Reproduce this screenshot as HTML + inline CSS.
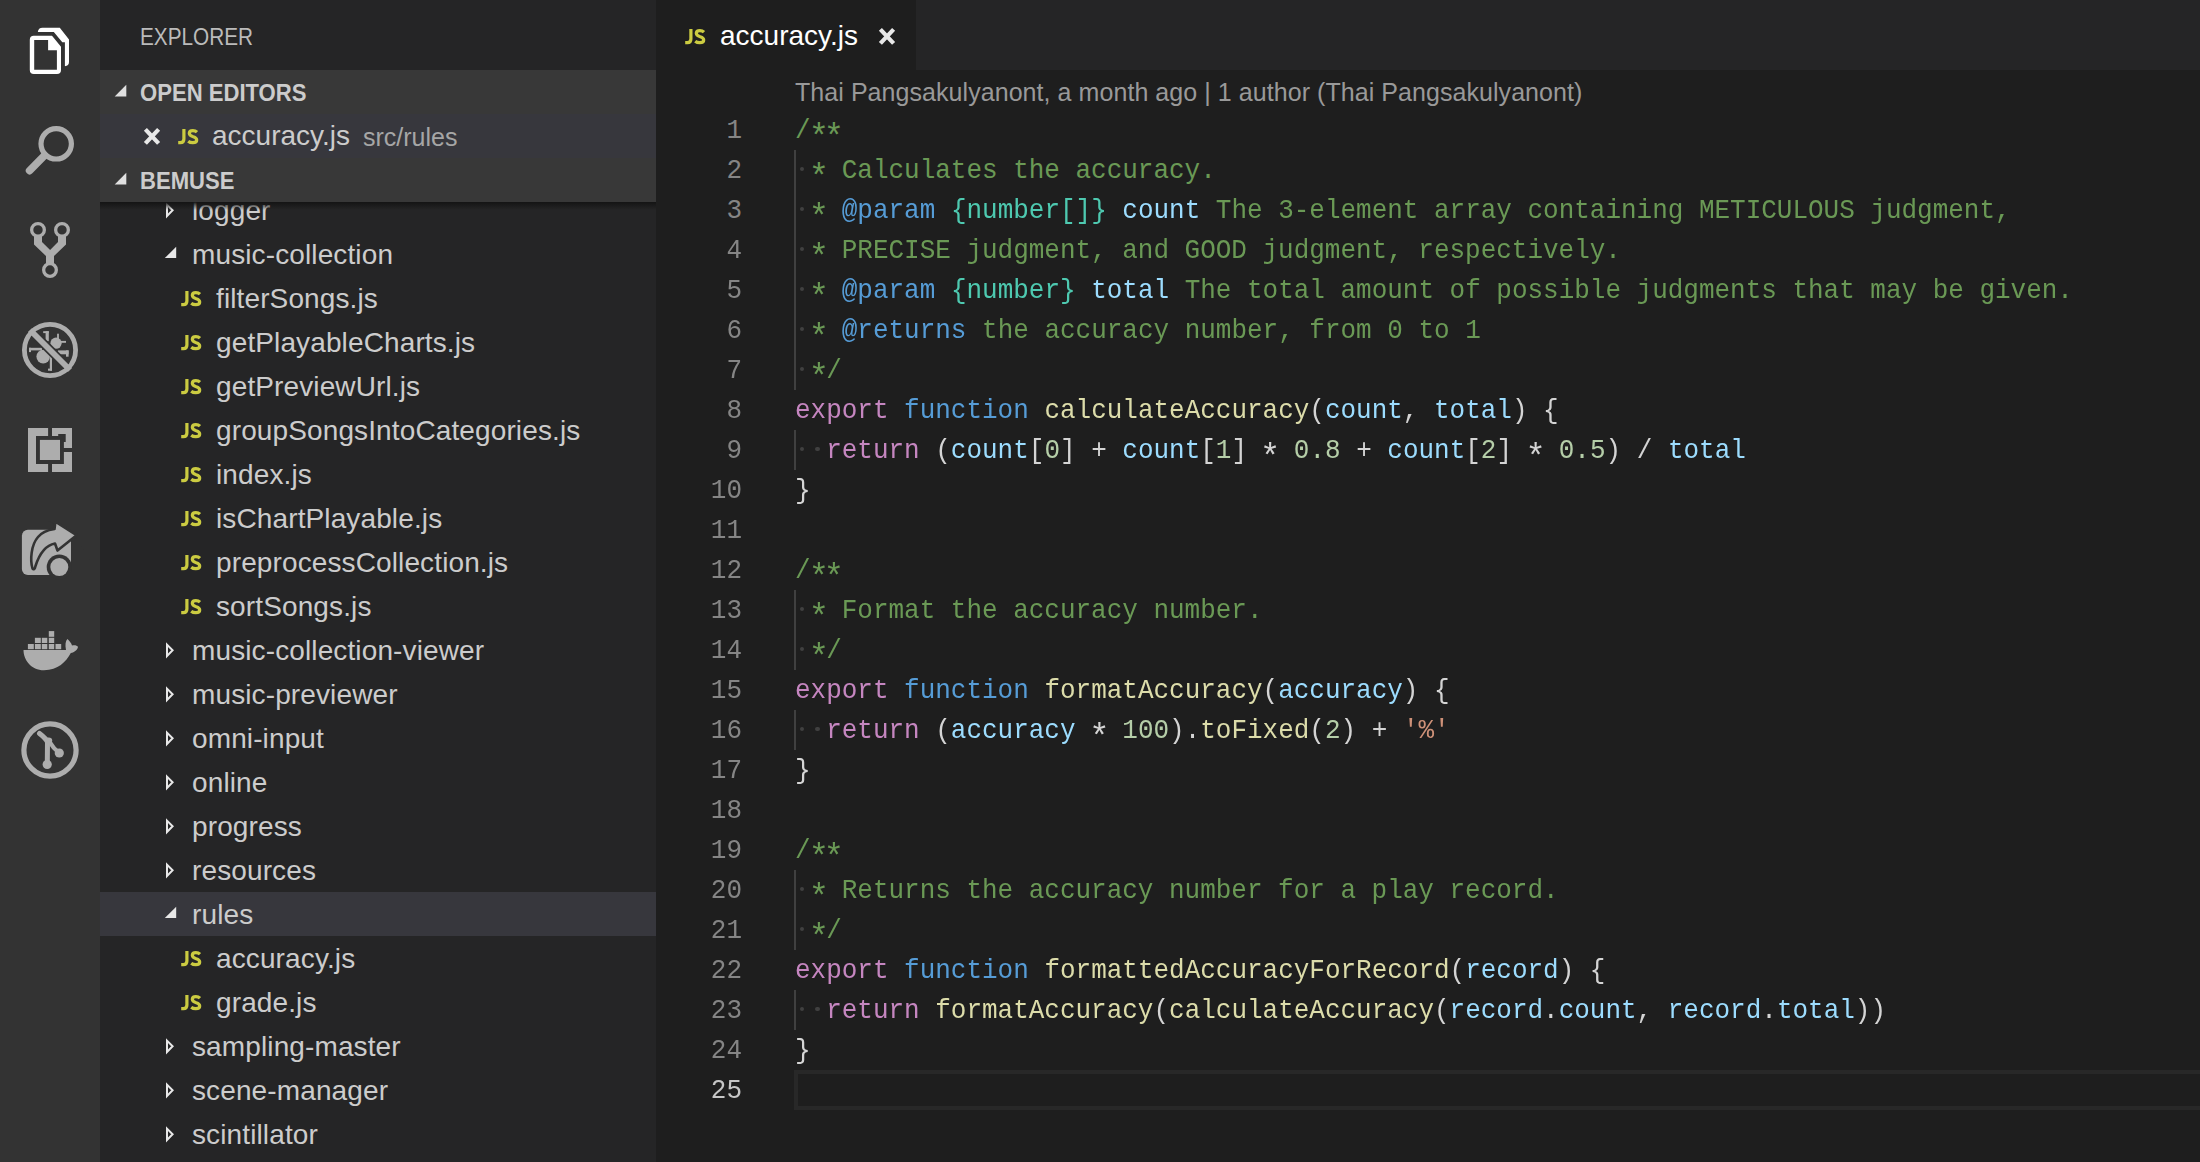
<!DOCTYPE html>
<html><head><meta charset="utf-8"><style>
*{box-sizing:border-box}
html,body{margin:0;padding:0;width:2200px;height:1162px;overflow:hidden;background:#1e1e1e;font-family:"Liberation Sans",sans-serif}
.ab{position:absolute;left:0;top:0;width:100px;height:1162px;background:#333333}
.ab svg{position:absolute}
.sb{position:absolute;left:100px;top:0;width:556px;height:1162px;background:#252526;overflow:hidden}
.title{position:absolute;left:40px;top:1px;height:70px;line-height:72px;font-size:23px;color:#bbbbbb;transform:scaleX(0.902);transform-origin:0 0}
.hdr{position:absolute;left:0;width:556px;height:44px;background:#383838;color:#cccccc;font-weight:bold;font-size:22px;line-height:44px;z-index:2}
.hdr .t{position:absolute;left:40px;top:1px;font-size:23px;transform:scaleX(0.96);transform-origin:0 0}
.hdr svg{position:absolute}
.shadow{position:absolute;left:0;top:202px;width:556px;height:8px;background:linear-gradient(#141414,rgba(20,20,20,0));z-index:2}
.row{position:absolute;left:0;width:556px;height:44px;font-size:28px;line-height:44px;color:#cccccc;white-space:nowrap}
.row.sel{background:#37373d}
.row svg{position:absolute}
.lbl{position:absolute;top:1px;letter-spacing:0.12px}
.js{position:absolute;top:0;color:#cbcb41;font-weight:bold;font-size:19px;letter-spacing:-0.5px}
.ed{position:absolute;left:656px;top:0;width:1544px;height:1162px;background:#1e1e1e}
.tabs{position:absolute;left:0;top:0;width:1544px;height:70px;background:#252526}
.tab{position:absolute;left:0;top:0;width:260px;height:70px;background:#1e1e1e}
.tab .js{left:30px;top:0;line-height:72px}
.tab .nm{position:absolute;left:64px;top:0;line-height:72px;font-size:28px;color:#ffffff}
.lens{position:absolute;left:139px;top:71px;height:40px;line-height:42px;font-size:25px;color:#999999;white-space:pre;letter-spacing:0.06px}
.ln{position:absolute;left:0;width:86px;text-align:right;color:#858585;height:40px;line-height:42px;font-family:"Liberation Mono",monospace;font-size:27.5px;transform:scaleX(0.9443);transform-origin:100% 0}
.ln.cur{color:#c6c6c6}
.cl{position:absolute;left:139px;height:40px;line-height:42px;white-space:pre;font-family:"Liberation Mono",monospace;font-size:27.5px;color:#d4d4d4;transform:scaleX(0.9443);transform-origin:0 0}
.c{color:#6a9955}.k{color:#c586c0}.f{color:#569cd6}.y{color:#dcdcaa}.v{color:#9cdcfe}.n{color:#b5cea8}.t2{color:#4ec9b0}.s{color:#ce9178}
.ast{display:inline-block;transform:translateY(8px) scale(1.3)}
.dot{position:absolute;width:4.4px;height:4.4px;border-radius:2.2px;background:#404040}
.guide{position:absolute;left:138px;width:2px;height:40px;background:#404040}
.curline{position:absolute;left:138px;top:1070px;width:1410px;height:40px;border:4px solid #282828;border-right:none}
</style></head><body>

<div class="ab">
<svg width="100" height="820" viewBox="0 0 100 820" style="left:0;top:0">
 <!-- files -->
 <path fill="#ffffff" fill-rule="evenodd" d="M29.8 39.7 Q29.8 35.7 33.8 35.7 L52 35.7 L61 46.8 L61 70 Q61 74 57 74 L33.8 74 Q29.8 74 29.8 70 Z M34.2 40.1 L48.1 40.1 L48.1 50.2 L56.9 50.2 L56.9 69.8 L34.2 69.8 Z"/>
 <path fill="#ffffff" d="M37.8 32.1 Q38.3 27.7 42.5 27.7 L59.8 27.7 L69 39.4 L69 62 Q69 66 64.9 66.2 L64.9 42.2 L62.3 42.2 L53.8 32.1 Z"/>
 <!-- search -->
 <g fill="none" stroke="#adadad">
  <circle cx="56.2" cy="143.8" r="15.2" stroke-width="5.2"/>
  <line x1="44.6" y1="155.4" x2="29.6" y2="170.6" stroke-width="7.6" stroke-linecap="round"/>
 </g>
 <!-- scm -->
 <g fill="none" stroke="#adadad" stroke-width="3.3">
  <circle cx="38" cy="229.9" r="6.35"/><circle cx="62" cy="229.9" r="6.35"/><circle cx="50" cy="270" r="6.35"/>
 </g>
 <path fill="#adadad" d="M34 235.5 L42 235.5 L42 242.1 L50.1 250 L58 242.1 L58 235.5 L66 235.5 L66 244.5 L54 256 L54 264.5 L46 264.5 L46 256 L34 244.5 Z"/>
 <!-- debug -->
 <circle cx="50" cy="350" r="25.6" fill="none" stroke="#adadad" stroke-width="4.8"/>
 <g fill="#adadad">
  <circle cx="43.2" cy="356.6" r="6.8"/>
  <rect x="29" y="347.8" width="13" height="2.6"/><rect x="29" y="347.8" width="2" height="4.3"/>
  <rect x="49.8" y="356" width="2.2" height="14.7"/><rect x="48" y="368.6" width="4" height="2.1"/>
  <circle cx="56" cy="343.2" r="5.6"/>
  <rect x="43.2" y="331.2" width="5.6" height="1.9"/><rect x="45.6" y="331.2" width="3.2" height="10"/>
  <rect x="57.1" y="333.7" width="1.8" height="6"/>
  <rect x="59" y="340.9" width="7" height="1.9"/>
  <rect x="57.9" y="350.4" width="10.7" height="3.9"/><rect x="66" y="350.4" width="2.6" height="6.3"/>
 </g>
 <clipPath id="dc"><circle cx="50" cy="350" r="23.3"/></clipPath>
 <line x1="26" y1="326" x2="74" y2="374" stroke="#333333" stroke-width="9.2" clip-path="url(#dc)"/>
 <line x1="30" y1="330" x2="70" y2="370" stroke="#adadad" stroke-width="5.9"/>
 <!-- extensions -->
 <g fill="#adadad">
  <path d="M28 428 L48.1 428 L48.1 436 L36 436 L36 463.9 L48.1 463.9 L48.1 472 L28 472 Z"/>
  <path d="M52 428 L72 428 L72 448.1 L63.9 448.1 L63.9 442 L65.7 442 L65.7 434 L58.2 434 L58.2 436 L52 436 Z"/>
  <path d="M63.9 452 L72 452 L72 472 L52 472 L52 463.9 L63.9 463.9 Z"/>
  <rect x="39.9" y="439.9" width="20.1" height="20.1"/>
 </g>
 <!-- live share -->
 <rect x="21.9" y="529.8" width="49.1" height="45.1" rx="6" fill="#adadad"/>
 <path d="M47 520 L90 520 L90 560 L74.3 535.2 Z" fill="#333333"/>
 <circle cx="59.3" cy="567.1" r="12.6" fill="#333333"/>
 <circle cx="59.3" cy="567.1" r="9" fill="#adadad"/>
 <path d="M32.5 568.5 C30 560, 31 545, 38 537 C42 532, 48 530, 54.5 529 L55.4 521.6 L76.6 535.2 L57.5 550.5 L55 543.5 C47 545, 40 552, 35.5 566 C35 569, 33.5 570, 32.5 568.5 Z" fill="#adadad" stroke="#333333" stroke-width="2.6" stroke-linejoin="round"/>
 <!-- docker -->
 <g fill="#adadad">
  <rect x="27.9" y="644" width="5.9" height="5.2"/><rect x="34.9" y="644" width="5.9" height="5.2"/><rect x="41.8" y="644" width="5.5" height="5.2"/><rect x="48.8" y="644" width="5.4" height="5.2"/><rect x="55.5" y="644" width="5.7" height="5.2"/>
  <rect x="34.9" y="637.8" width="5.9" height="5.2"/><rect x="41.8" y="637.8" width="5.5" height="5.2"/><rect x="48.8" y="637.8" width="5.4" height="5.2"/>
  <rect x="48.8" y="631.1" width="5.4" height="5.7"/>
  <path d="M23.5 650 L66 650 C65 645, 65.5 641, 67.4 639.1 C69.5 641, 71.5 643.5, 72 645.5 C74 644.8, 77 645, 78 646.8 C77.5 650, 74.5 652.5, 70.8 653 C66 662, 58 670, 44 670.3 C31 670, 23.5 660, 23.5 650 Z"/>
 </g>
 <!-- gitlens -->
 <circle cx="50" cy="750" r="26.1" fill="none" stroke="#adadad" stroke-width="5.2"/>
 <g fill="none" stroke="#adadad" stroke-linecap="round">
  <path d="M39.5 733.5 Q46 738.5 47.5 742 L47.3 764" stroke-width="5"/>
  <path d="M50 742.5 Q53 748 59.3 753" stroke-width="4.2"/>
 </g>
 <circle cx="47.2" cy="764.4" r="4.6" fill="#adadad"/><ellipse cx="48.6" cy="740.6" rx="3.6" ry="3.2" fill="#adadad"/>
 <circle cx="59.3" cy="753" r="4.6" fill="#adadad"/>
</svg>
</div>

<div class="sb">
  <div class="title">EXPLORER</div>
  <div class="hdr" style="top:70px"><svg style="left:14px;top:14px" width="14" height="14" viewBox="0 0 14 14"><path d="M12.3 0.8 L12.3 12.4 L0.7 12.4 Z" fill="#e0e0e0"/></svg><span class="t">OPEN EDITORS</span></div>
  <div class="hdr" style="top:114px;background:#37373d;font-weight:normal;font-size:28px">
    <svg style="left:43px;top:13px" width="18" height="19" viewBox="0 0 18 19"><path d="M2.4 2.4 L15.6 16.4 M15.6 2.4 L2.4 16.4" stroke="#e8e8e8" stroke-width="4.2"/></svg>
    <svg style="position:absolute;left:77.6px;top:15px;overflow:visible" width="22" height="17" viewBox="0 0 22 17"><g fill="none" stroke="#cbcb41" stroke-width="3.2"><path d="M5.9 0 L5.9 10 C5.9 12.6, 4.6 13.7, 2.4 13.7 L0.2 13.7"/><path d="M19 3.2 C17.8 2, 16.4 1.6, 14.9 1.6 C12.6 1.6, 11.3 2.8, 11.3 4.3 C11.3 6.3, 13 7, 15.2 7.7 C17.6 8.4, 18.7 9.4, 18.7 11 C18.7 12.9, 17 13.7, 14.8 13.7 C13 13.7, 11.4 13.2, 10.2 12.2"/></g></svg>
    <span style="position:absolute;left:112px;top:0;color:#cccccc">accuracy.js</span>
    <span style="position:absolute;left:263px;top:1px;color:#a6a6a6;font-size:25px">src/rules</span>
  </div>
  <div class="hdr" style="top:158px"><svg style="left:14px;top:14px" width="14" height="14" viewBox="0 0 14 14"><path d="M12.3 0.8 L12.3 12.4 L0.7 12.4 Z" fill="#e0e0e0"/></svg><span class="t">BEMUSE</span></div>
  <div class="shadow"></div>
  <div class="row" style="top:188px"><svg class="arr" style="left:65px;top:14px" width="10" height="17" viewBox="0 0 10 17"><path d="M2 2.6 L7.6 8.3 L2 14 Z" fill="none" stroke="#e8e8e8" stroke-width="2" stroke-linejoin="miter"/></svg><span class="lbl" style="left:92px">logger</span></div><div class="row" style="top:232px"><svg class="arr" style="left:64px;top:14px" width="14" height="14" viewBox="0 0 14 14"><path d="M12.2 0.7 L12.2 12.1 L0.8 12.1 Z" fill="#e8e8e8"/></svg><span class="lbl" style="left:92px">music-collection</span></div><div class="row" style="top:276px"><svg style="position:absolute;left:81.3px;top:15px;overflow:visible" width="22" height="17" viewBox="0 0 22 17"><g fill="none" stroke="#cbcb41" stroke-width="3.2"><path d="M5.9 0 L5.9 10 C5.9 12.6, 4.6 13.7, 2.4 13.7 L0.2 13.7"/><path d="M19 3.2 C17.8 2, 16.4 1.6, 14.9 1.6 C12.6 1.6, 11.3 2.8, 11.3 4.3 C11.3 6.3, 13 7, 15.2 7.7 C17.6 8.4, 18.7 9.4, 18.7 11 C18.7 12.9, 17 13.7, 14.8 13.7 C13 13.7, 11.4 13.2, 10.2 12.2"/></g></svg><span class="lbl" style="left:116px">filterSongs.js</span></div><div class="row" style="top:320px"><svg style="position:absolute;left:81.3px;top:15px;overflow:visible" width="22" height="17" viewBox="0 0 22 17"><g fill="none" stroke="#cbcb41" stroke-width="3.2"><path d="M5.9 0 L5.9 10 C5.9 12.6, 4.6 13.7, 2.4 13.7 L0.2 13.7"/><path d="M19 3.2 C17.8 2, 16.4 1.6, 14.9 1.6 C12.6 1.6, 11.3 2.8, 11.3 4.3 C11.3 6.3, 13 7, 15.2 7.7 C17.6 8.4, 18.7 9.4, 18.7 11 C18.7 12.9, 17 13.7, 14.8 13.7 C13 13.7, 11.4 13.2, 10.2 12.2"/></g></svg><span class="lbl" style="left:116px">getPlayableCharts.js</span></div><div class="row" style="top:364px"><svg style="position:absolute;left:81.3px;top:15px;overflow:visible" width="22" height="17" viewBox="0 0 22 17"><g fill="none" stroke="#cbcb41" stroke-width="3.2"><path d="M5.9 0 L5.9 10 C5.9 12.6, 4.6 13.7, 2.4 13.7 L0.2 13.7"/><path d="M19 3.2 C17.8 2, 16.4 1.6, 14.9 1.6 C12.6 1.6, 11.3 2.8, 11.3 4.3 C11.3 6.3, 13 7, 15.2 7.7 C17.6 8.4, 18.7 9.4, 18.7 11 C18.7 12.9, 17 13.7, 14.8 13.7 C13 13.7, 11.4 13.2, 10.2 12.2"/></g></svg><span class="lbl" style="left:116px">getPreviewUrl.js</span></div><div class="row" style="top:408px"><svg style="position:absolute;left:81.3px;top:15px;overflow:visible" width="22" height="17" viewBox="0 0 22 17"><g fill="none" stroke="#cbcb41" stroke-width="3.2"><path d="M5.9 0 L5.9 10 C5.9 12.6, 4.6 13.7, 2.4 13.7 L0.2 13.7"/><path d="M19 3.2 C17.8 2, 16.4 1.6, 14.9 1.6 C12.6 1.6, 11.3 2.8, 11.3 4.3 C11.3 6.3, 13 7, 15.2 7.7 C17.6 8.4, 18.7 9.4, 18.7 11 C18.7 12.9, 17 13.7, 14.8 13.7 C13 13.7, 11.4 13.2, 10.2 12.2"/></g></svg><span class="lbl" style="left:116px">groupSongsIntoCategories.js</span></div><div class="row" style="top:452px"><svg style="position:absolute;left:81.3px;top:15px;overflow:visible" width="22" height="17" viewBox="0 0 22 17"><g fill="none" stroke="#cbcb41" stroke-width="3.2"><path d="M5.9 0 L5.9 10 C5.9 12.6, 4.6 13.7, 2.4 13.7 L0.2 13.7"/><path d="M19 3.2 C17.8 2, 16.4 1.6, 14.9 1.6 C12.6 1.6, 11.3 2.8, 11.3 4.3 C11.3 6.3, 13 7, 15.2 7.7 C17.6 8.4, 18.7 9.4, 18.7 11 C18.7 12.9, 17 13.7, 14.8 13.7 C13 13.7, 11.4 13.2, 10.2 12.2"/></g></svg><span class="lbl" style="left:116px">index.js</span></div><div class="row" style="top:496px"><svg style="position:absolute;left:81.3px;top:15px;overflow:visible" width="22" height="17" viewBox="0 0 22 17"><g fill="none" stroke="#cbcb41" stroke-width="3.2"><path d="M5.9 0 L5.9 10 C5.9 12.6, 4.6 13.7, 2.4 13.7 L0.2 13.7"/><path d="M19 3.2 C17.8 2, 16.4 1.6, 14.9 1.6 C12.6 1.6, 11.3 2.8, 11.3 4.3 C11.3 6.3, 13 7, 15.2 7.7 C17.6 8.4, 18.7 9.4, 18.7 11 C18.7 12.9, 17 13.7, 14.8 13.7 C13 13.7, 11.4 13.2, 10.2 12.2"/></g></svg><span class="lbl" style="left:116px">isChartPlayable.js</span></div><div class="row" style="top:540px"><svg style="position:absolute;left:81.3px;top:15px;overflow:visible" width="22" height="17" viewBox="0 0 22 17"><g fill="none" stroke="#cbcb41" stroke-width="3.2"><path d="M5.9 0 L5.9 10 C5.9 12.6, 4.6 13.7, 2.4 13.7 L0.2 13.7"/><path d="M19 3.2 C17.8 2, 16.4 1.6, 14.9 1.6 C12.6 1.6, 11.3 2.8, 11.3 4.3 C11.3 6.3, 13 7, 15.2 7.7 C17.6 8.4, 18.7 9.4, 18.7 11 C18.7 12.9, 17 13.7, 14.8 13.7 C13 13.7, 11.4 13.2, 10.2 12.2"/></g></svg><span class="lbl" style="left:116px">preprocessCollection.js</span></div><div class="row" style="top:584px"><svg style="position:absolute;left:81.3px;top:15px;overflow:visible" width="22" height="17" viewBox="0 0 22 17"><g fill="none" stroke="#cbcb41" stroke-width="3.2"><path d="M5.9 0 L5.9 10 C5.9 12.6, 4.6 13.7, 2.4 13.7 L0.2 13.7"/><path d="M19 3.2 C17.8 2, 16.4 1.6, 14.9 1.6 C12.6 1.6, 11.3 2.8, 11.3 4.3 C11.3 6.3, 13 7, 15.2 7.7 C17.6 8.4, 18.7 9.4, 18.7 11 C18.7 12.9, 17 13.7, 14.8 13.7 C13 13.7, 11.4 13.2, 10.2 12.2"/></g></svg><span class="lbl" style="left:116px">sortSongs.js</span></div><div class="row" style="top:628px"><svg class="arr" style="left:65px;top:14px" width="10" height="17" viewBox="0 0 10 17"><path d="M2 2.6 L7.6 8.3 L2 14 Z" fill="none" stroke="#e8e8e8" stroke-width="2" stroke-linejoin="miter"/></svg><span class="lbl" style="left:92px">music-collection-viewer</span></div><div class="row" style="top:672px"><svg class="arr" style="left:65px;top:14px" width="10" height="17" viewBox="0 0 10 17"><path d="M2 2.6 L7.6 8.3 L2 14 Z" fill="none" stroke="#e8e8e8" stroke-width="2" stroke-linejoin="miter"/></svg><span class="lbl" style="left:92px">music-previewer</span></div><div class="row" style="top:716px"><svg class="arr" style="left:65px;top:14px" width="10" height="17" viewBox="0 0 10 17"><path d="M2 2.6 L7.6 8.3 L2 14 Z" fill="none" stroke="#e8e8e8" stroke-width="2" stroke-linejoin="miter"/></svg><span class="lbl" style="left:92px">omni-input</span></div><div class="row" style="top:760px"><svg class="arr" style="left:65px;top:14px" width="10" height="17" viewBox="0 0 10 17"><path d="M2 2.6 L7.6 8.3 L2 14 Z" fill="none" stroke="#e8e8e8" stroke-width="2" stroke-linejoin="miter"/></svg><span class="lbl" style="left:92px">online</span></div><div class="row" style="top:804px"><svg class="arr" style="left:65px;top:14px" width="10" height="17" viewBox="0 0 10 17"><path d="M2 2.6 L7.6 8.3 L2 14 Z" fill="none" stroke="#e8e8e8" stroke-width="2" stroke-linejoin="miter"/></svg><span class="lbl" style="left:92px">progress</span></div><div class="row" style="top:848px"><svg class="arr" style="left:65px;top:14px" width="10" height="17" viewBox="0 0 10 17"><path d="M2 2.6 L7.6 8.3 L2 14 Z" fill="none" stroke="#e8e8e8" stroke-width="2" stroke-linejoin="miter"/></svg><span class="lbl" style="left:92px">resources</span></div><div class="row sel" style="top:892px"><svg class="arr" style="left:64px;top:14px" width="14" height="14" viewBox="0 0 14 14"><path d="M12.2 0.7 L12.2 12.1 L0.8 12.1 Z" fill="#e8e8e8"/></svg><span class="lbl" style="left:92px">rules</span></div><div class="row" style="top:936px"><svg style="position:absolute;left:81.3px;top:15px;overflow:visible" width="22" height="17" viewBox="0 0 22 17"><g fill="none" stroke="#cbcb41" stroke-width="3.2"><path d="M5.9 0 L5.9 10 C5.9 12.6, 4.6 13.7, 2.4 13.7 L0.2 13.7"/><path d="M19 3.2 C17.8 2, 16.4 1.6, 14.9 1.6 C12.6 1.6, 11.3 2.8, 11.3 4.3 C11.3 6.3, 13 7, 15.2 7.7 C17.6 8.4, 18.7 9.4, 18.7 11 C18.7 12.9, 17 13.7, 14.8 13.7 C13 13.7, 11.4 13.2, 10.2 12.2"/></g></svg><span class="lbl" style="left:116px">accuracy.js</span></div><div class="row" style="top:980px"><svg style="position:absolute;left:81.3px;top:15px;overflow:visible" width="22" height="17" viewBox="0 0 22 17"><g fill="none" stroke="#cbcb41" stroke-width="3.2"><path d="M5.9 0 L5.9 10 C5.9 12.6, 4.6 13.7, 2.4 13.7 L0.2 13.7"/><path d="M19 3.2 C17.8 2, 16.4 1.6, 14.9 1.6 C12.6 1.6, 11.3 2.8, 11.3 4.3 C11.3 6.3, 13 7, 15.2 7.7 C17.6 8.4, 18.7 9.4, 18.7 11 C18.7 12.9, 17 13.7, 14.8 13.7 C13 13.7, 11.4 13.2, 10.2 12.2"/></g></svg><span class="lbl" style="left:116px">grade.js</span></div><div class="row" style="top:1024px"><svg class="arr" style="left:65px;top:14px" width="10" height="17" viewBox="0 0 10 17"><path d="M2 2.6 L7.6 8.3 L2 14 Z" fill="none" stroke="#e8e8e8" stroke-width="2" stroke-linejoin="miter"/></svg><span class="lbl" style="left:92px">sampling-master</span></div><div class="row" style="top:1068px"><svg class="arr" style="left:65px;top:14px" width="10" height="17" viewBox="0 0 10 17"><path d="M2 2.6 L7.6 8.3 L2 14 Z" fill="none" stroke="#e8e8e8" stroke-width="2" stroke-linejoin="miter"/></svg><span class="lbl" style="left:92px">scene-manager</span></div><div class="row" style="top:1112px"><svg class="arr" style="left:65px;top:14px" width="10" height="17" viewBox="0 0 10 17"><path d="M2 2.6 L7.6 8.3 L2 14 Z" fill="none" stroke="#e8e8e8" stroke-width="2" stroke-linejoin="miter"/></svg><span class="lbl" style="left:92px">scintillator</span></div>
</div>

<div class="ed">
  <div class="tabs"><div class="tab"><svg style="position:absolute;left:29.3px;top:29.3px;overflow:visible" width="22" height="17" viewBox="0 0 22 17"><g fill="none" stroke="#cbcb41" stroke-width="3.2"><path d="M5.9 0 L5.9 10 C5.9 12.6, 4.6 13.7, 2.4 13.7 L0.2 13.7"/><path d="M19 3.2 C17.8 2, 16.4 1.6, 14.9 1.6 C12.6 1.6, 11.3 2.8, 11.3 4.3 C11.3 6.3, 13 7, 15.2 7.7 C17.6 8.4, 18.7 9.4, 18.7 11 C18.7 12.9, 17 13.7, 14.8 13.7 C13 13.7, 11.4 13.2, 10.2 12.2"/></g></svg><span class="nm">accuracy.js</span>
  <svg style="position:absolute;left:222px;top:26.5px" width="18" height="19" viewBox="0 0 18 19"><path d="M2.4 2.4 L15.6 16.4 M15.6 2.4 L2.4 16.4" stroke="#e8e8e8" stroke-width="4.2"/></svg></div></div>
  <div class="lens">Thai Pangsakulyanont, a month ago | 1 author (Thai Pangsakulyanont)</div>
  <div class="curline"></div>
  <div class="ln" style="top:110px">1</div><div class="cl" style="top:110px"><span class="c">/<span class="ast">*</span><span class="ast">*</span></span></div><div class="ln" style="top:150px">2</div><div class="cl" style="top:150px"><span class="ws"> </span><span class="c"><span class="ast">*</span> Calculates the accuracy.</span></div><div class="dot" style="top:167px;left:143.8px"></div><div class="guide" style="top:150px"></div><div class="ln" style="top:190px">3</div><div class="cl" style="top:190px"><span class="ws"> </span><span class="c"><span class="ast">*</span> </span><span class="f">@param</span><span class="c"> </span><span class="t2">{number[]}</span><span class="c"> </span><span class="v">count</span><span class="c"> The 3-element array containing METICULOUS judgment,</span></div><div class="dot" style="top:207px;left:143.8px"></div><div class="guide" style="top:190px"></div><div class="ln" style="top:230px">4</div><div class="cl" style="top:230px"><span class="ws"> </span><span class="c"><span class="ast">*</span> PRECISE judgment, and GOOD judgment, respectively.</span></div><div class="dot" style="top:247px;left:143.8px"></div><div class="guide" style="top:230px"></div><div class="ln" style="top:270px">5</div><div class="cl" style="top:270px"><span class="ws"> </span><span class="c"><span class="ast">*</span> </span><span class="f">@param</span><span class="c"> </span><span class="t2">{number}</span><span class="c"> </span><span class="v">total</span><span class="c"> The total amount of possible judgments that may be given.</span></div><div class="dot" style="top:287px;left:143.8px"></div><div class="guide" style="top:270px"></div><div class="ln" style="top:310px">6</div><div class="cl" style="top:310px"><span class="ws"> </span><span class="c"><span class="ast">*</span> </span><span class="f">@returns</span><span class="c"> the accuracy number, from 0 to 1</span></div><div class="dot" style="top:327px;left:143.8px"></div><div class="guide" style="top:310px"></div><div class="ln" style="top:350px">7</div><div class="cl" style="top:350px"><span class="ws"> </span><span class="c"><span class="ast">*</span>/</span></div><div class="dot" style="top:367px;left:143.8px"></div><div class="guide" style="top:350px"></div><div class="ln" style="top:390px">8</div><div class="cl" style="top:390px"><span class="k">export</span> <span class="f">function</span> <span class="y">calculateAccuracy</span>(<span class="v">count</span>, <span class="v">total</span>) {</div><div class="ln" style="top:430px">9</div><div class="cl" style="top:430px"><span class="ws">  </span><span class="k">return</span> (<span class="v">count</span>[<span class="n">0</span>] + <span class="v">count</span>[<span class="n">1</span>] <span class="ast">*</span> <span class="n">0.8</span> + <span class="v">count</span>[<span class="n">2</span>] <span class="ast">*</span> <span class="n">0.5</span>) / <span class="v">total</span></div><div class="dot" style="top:447px;left:143.8px"></div><div class="dot" style="top:447px;left:159.4px"></div><div class="guide" style="top:430px"></div><div class="ln" style="top:470px">10</div><div class="cl" style="top:470px">}</div><div class="ln" style="top:510px">11</div><div class="cl" style="top:510px"></div><div class="ln" style="top:550px">12</div><div class="cl" style="top:550px"><span class="c">/<span class="ast">*</span><span class="ast">*</span></span></div><div class="ln" style="top:590px">13</div><div class="cl" style="top:590px"><span class="ws"> </span><span class="c"><span class="ast">*</span> Format the accuracy number.</span></div><div class="dot" style="top:607px;left:143.8px"></div><div class="guide" style="top:590px"></div><div class="ln" style="top:630px">14</div><div class="cl" style="top:630px"><span class="ws"> </span><span class="c"><span class="ast">*</span>/</span></div><div class="dot" style="top:647px;left:143.8px"></div><div class="guide" style="top:630px"></div><div class="ln" style="top:670px">15</div><div class="cl" style="top:670px"><span class="k">export</span> <span class="f">function</span> <span class="y">formatAccuracy</span>(<span class="v">accuracy</span>) {</div><div class="ln" style="top:710px">16</div><div class="cl" style="top:710px"><span class="ws">  </span><span class="k">return</span> (<span class="v">accuracy</span> <span class="ast">*</span> <span class="n">100</span>).<span class="y">toFixed</span>(<span class="n">2</span>) + <span class="s">'%'</span></div><div class="dot" style="top:727px;left:143.8px"></div><div class="dot" style="top:727px;left:159.4px"></div><div class="guide" style="top:710px"></div><div class="ln" style="top:750px">17</div><div class="cl" style="top:750px">}</div><div class="ln" style="top:790px">18</div><div class="cl" style="top:790px"></div><div class="ln" style="top:830px">19</div><div class="cl" style="top:830px"><span class="c">/<span class="ast">*</span><span class="ast">*</span></span></div><div class="ln" style="top:870px">20</div><div class="cl" style="top:870px"><span class="ws"> </span><span class="c"><span class="ast">*</span> Returns the accuracy number for a play record.</span></div><div class="dot" style="top:887px;left:143.8px"></div><div class="guide" style="top:870px"></div><div class="ln" style="top:910px">21</div><div class="cl" style="top:910px"><span class="ws"> </span><span class="c"><span class="ast">*</span>/</span></div><div class="dot" style="top:927px;left:143.8px"></div><div class="guide" style="top:910px"></div><div class="ln" style="top:950px">22</div><div class="cl" style="top:950px"><span class="k">export</span> <span class="f">function</span> <span class="y">formattedAccuracyForRecord</span>(<span class="v">record</span>) {</div><div class="ln" style="top:990px">23</div><div class="cl" style="top:990px"><span class="ws">  </span><span class="k">return</span> <span class="y">formatAccuracy</span>(<span class="y">calculateAccuracy</span>(<span class="v">record</span>.<span class="v">count</span>, <span class="v">record</span>.<span class="v">total</span>))</div><div class="dot" style="top:1007px;left:143.8px"></div><div class="dot" style="top:1007px;left:159.4px"></div><div class="guide" style="top:990px"></div><div class="ln" style="top:1030px">24</div><div class="cl" style="top:1030px">}</div><div class="ln cur" style="top:1070px">25</div><div class="cl" style="top:1070px"></div>
</div>

</body></html>
